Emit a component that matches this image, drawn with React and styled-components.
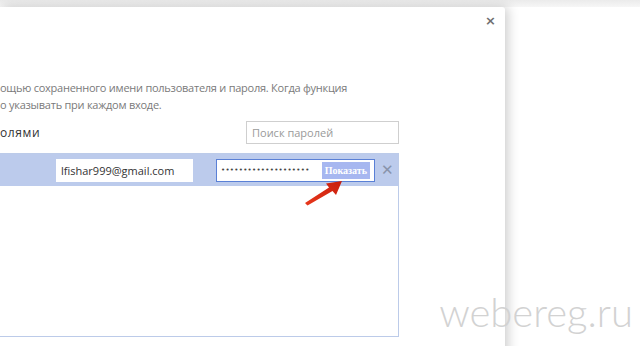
import React from "react";
import styled, { createGlobalStyle } from "styled-components";

const GlobalStyle = createGlobalStyle`
  html, body {
    margin: 0;
    padding: 0;
    background: #fff;
  }
  body {
    font-family: "Open Sans", "Noto Sans", sans-serif;
  }
`;

const Page = styled.div`
  position: relative;
  width: 640px;
  height: 346px;
  overflow: hidden;
  background: linear-gradient(#ebebeb, #f6f6f6 7px, #fff 7px);
`;

const Dialog = styled.div`
  margin-top: 7px;
  width: 505px;
  height: 360px;
  background: #fff;
  border-radius: 0 3px 0 0;
  box-shadow: 3px 0 12px rgba(0, 0, 0, 0.2);
  display: flex;
  flex-direction: column;
  padding-right: 106px;
  box-sizing: border-box;
`;

const TopBar = styled.div`
  height: 60px;
  display: flex;
  justify-content: flex-end;
  margin-right: -106px;
  padding: 6px 9px 0 0;
  box-sizing: border-box;
`;

const Close = styled.span`
  font-family: "DejaVu Sans", sans-serif;
  font-size: 13px;
  font-weight: bold;
  color: #6f6f6f;
  line-height: 16px;
`;

const Description = styled.p`
  margin: 12px 0 0;
  font-size: 11px;
  line-height: 17px;
  letter-spacing: -0.25px;
  color: #7a7a7a;
`;

const HeadRow = styled.div`
  display: flex;
  align-items: center;
  justify-content: space-between;
  margin-top: 7px;
  height: 24px;
`;

const Heading = styled.span`
  font-size: 12px;
  color: #333;
  letter-spacing: 0.6px;
  padding-top: 1px;
`;

const Search = styled.div`
  width: 153px;
  height: 23px;
  border: 1px solid #cfcfcf;
  box-sizing: border-box;
  font-size: 11px;
  color: #9a9a9a;
  padding: 3px 0 0 5px;
`;

const List = styled.div`
  margin-top: 9px;
  height: 184px;
  border: 1px solid #bccbe9;
  border-left: none;
  box-sizing: border-box;
`;

const Row = styled.div`
  height: 32px;
  background: #bccbec;
  display: flex;
  align-items: center;
  padding-left: 56px;
`;

const Field = styled.div`
  height: 23px;
  box-sizing: border-box;
  background: #fff;
  display: flex;
  align-items: center;
  border: 1px solid ${(p) => (p.focused ? "#5a80d6" : "#fff")};
  width: ${(p) => p.w}px;
  margin-left: ${(p) => p.gap || 0}px;
  padding-left: 4px;
`;

const Value = styled.span`
  font-size: 11px;
  color: #333;
`;

const Dots = styled.span`
  font-family: "DejaVu Sans", sans-serif;
  font-size: 7px;
  letter-spacing: 0.3px;
  color: #444;
  flex: 1;
`;

const ShowButton = styled.span`
  background: #a7b7f0;
  color: #fff;
  font-family: "Liberation Serif", serif;
  font-weight: bold;
  font-size: 10px;
  height: 17px;
  line-height: 17px;
  padding: 0 3px;
  margin-right: 4px;
`;

const Remove = styled.span`
  margin-left: 6px;
  font-family: "DejaVu Sans", sans-serif;
  font-size: 15px;
  font-weight: bold;
  color: #8893ab;
`;

const Arrow = styled.svg`
  position: absolute;
  left: 300px;
  top: 176px;
`;

const Watermark = styled.div`
  position: absolute;
  right: 7px;
  bottom: 10px;
  font-family: Lato, "Open Sans", sans-serif;
  font-weight: 300;
  font-size: 40px;
  color: #d2d2d2;
`;

export default function App() {
  return (
    <Page>
      <GlobalStyle />
      <Dialog>
        <TopBar>
          <Close>×</Close>
        </TopBar>
        <Description>
          ощью сохраненного имени пользователя и пароля. Когда функция
          <br />о указывать при каждом входе.
        </Description>
        <HeadRow>
          <Heading>олями</Heading>
          <Search>Поиск паролей</Search>
        </HeadRow>
        <List>
          <Row>
            <Field w={137}>
              <Value>lfishar999@gmail.com</Value>
            </Field>
            <Field w={159} gap={23} focused>
              <Dots>{"•".repeat(20)}</Dots>
              <ShowButton>Показать</ShowButton>
            </Field>
            <Remove>✕</Remove>
          </Row>
        </List>
      </Dialog>
      <Arrow width="50" height="32" viewBox="0 0 50 32">
        <defs>
          <linearGradient id="ar" x1="0" y1="1" x2="1" y2="0">
            <stop offset="0" stopColor="#e8381c" />
            <stop offset="1" stopColor="#c81e0c" />
          </linearGradient>
        </defs>
        <path
          d="M5 27 L29 11.5 L26 7.5 L42 5 L36 19 L32.5 15 L7.5 29.5 Z"
          fill="url(#ar)"
        />
      </Arrow>
      <Watermark>webereg.ru</Watermark>
    </Page>
  );
}
